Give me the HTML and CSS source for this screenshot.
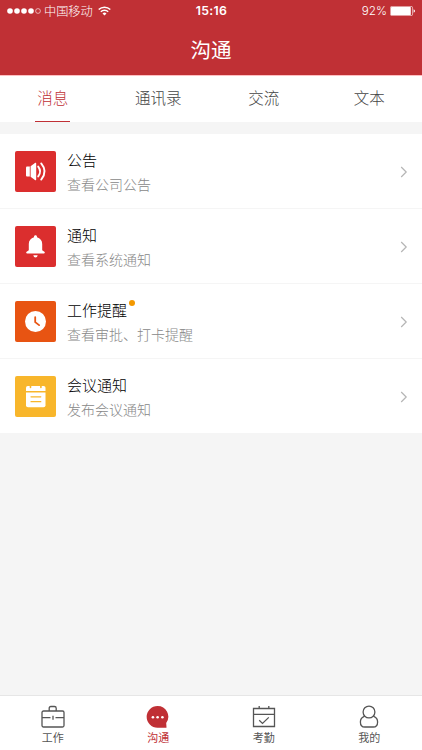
FILE: index.html
```
<!DOCTYPE html>
<html lang="zh-CN">
  <head>
    <meta charset="UTF-8" />
    <meta name="viewport" content="width=device-width, initial-scale=1.0" />
    <title>沟通</title>
    <link rel="stylesheet" href="styles.css">
  </head>
  <body>
    <header class="header">
      <div class="status-bar">
        <div class="status-left">
          <svg class="signal" width="34" height="8" viewBox="0 0 34 8" fill="#fff">
            <circle cx="3" cy="4" r="2.8" />
            <circle cx="10" cy="4" r="2.8" />
            <circle cx="17" cy="4" r="2.8" />
            <circle cx="24" cy="4" r="2.8" />
            <circle cx="31" cy="4" r="2.4" fill="none" stroke="#fff" stroke-width="0.6" />
          </svg>
          <span class="carrier">中国移动</span>
          <svg class="wifi" width="13" height="10" viewBox="0 0 13 10" fill="none" stroke="#fff" stroke-width="1.5">
            <path d="M0.7 3.5a8.3 8.3 0 0 1 11.6 0" />
            <path d="M2.8 5.7a5.3 5.3 0 0 1 7.4 0" />
            <path d="M6.5 9.4 4.5 7.4a2.9 2.9 0 0 1 4 0z" fill="#fff" stroke="none" />
          </svg>
        </div>
        <span class="time">15:16</span>
        <div class="status-right">
          <span>92%</span>
          <svg width="26" height="10" viewBox="0 0 26 10">
            <rect x="0.4" y="0.4" width="22.2" height="9.2" rx="1.4" fill="none" stroke="#fff" stroke-width="0.6" />
            <rect x="1" y="1" width="19.8" height="8" rx="0.6" fill="#fff" />
            <path d="M23.6 3.3q1.4 0.5 1.4 1.7t-1.4 1.7z" fill="#fff" />
          </svg>
        </div>
      </div>
      <h1>沟通</h1>
    </header>

    <nav class="tabs">
      <a class="tab active"><span>消息</span></a>
      <a class="tab"><span>通讯录</span></a>
      <a class="tab"><span>交流</span></a>
      <a class="tab"><span>文本</span></a>
    </nav>

    <main class="content">
      <ul class="list">
        <li class="item">
          <div class="icon red">
            <svg width="41" height="41" viewBox="0 0 41 41" fill="#fff">
              <path d="M11 16.5q0-1 1-1h2.8v10H12q-1 0-1-1z" />
              <path d="M15.6 15.3 20.3 11.8q.9-.5.9.6v16.2q0 1.1-.9.6l-4.7-3.5z" />
              <path d="M23.2 15.6q3.8 4.9 0 9.8M26.2 12.4q6.8 8.1 0 16.2" fill="none" stroke="#fff" stroke-width="1.9" stroke-linecap="round" />
            </svg>
          </div>
          <div class="text">
            <h2>公告</h2>
            <p>查看公司公告</p>
          </div>
          <svg class="arrow" width="8" height="12" viewBox="0 0 8 12"><path d="M1.2 1 6.2 6l-5 5" /></svg>
        </li>
        <li class="item">
          <div class="icon red">
            <svg width="41" height="41" viewBox="0 0 41 41" fill="#fff">
              <path d="M20.5 9.3c.9 0 1.5.6 1.5 1.5v.4c3.2.8 5.2 3.3 5.2 6.7v6.4l2.2 1.5c.8.7.4 1.6-.5 1.6H12.1c-.9 0-1.3-.9-.5-1.6l2.2-1.5v-6.4c0-3.4 2-5.9 5.2-6.7v-.4c0-.9.6-1.5 1.5-1.5z" />
              <path d="M18.3 29.2h4.4q-.4 2.4-2.2 2.4t-2.2-2.4z" />
            </svg>
          </div>
          <div class="text">
            <h2>通知</h2>
            <p>查看系统通知</p>
          </div>
          <svg class="arrow" width="8" height="12" viewBox="0 0 8 12"><path d="M1.2 1 6.2 6l-5 5" /></svg>
        </li>
        <li class="item">
          <div class="icon orange">
            <svg width="41" height="41" viewBox="0 0 41 41">
              <circle cx="20.5" cy="20.5" r="10.5" fill="#fff" />
              <path d="M20.2 16.2v4.9l3.9 3" fill="none" stroke="#e85412" stroke-width="1.8" stroke-linecap="round" />
            </svg>
          </div>
          <div class="text">
            <h2>工作提醒<i class="dot"></i></h2>
            <p>查看审批、打卡提醒</p>
          </div>
          <svg class="arrow" width="8" height="12" viewBox="0 0 8 12"><path d="M1.2 1 6.2 6l-5 5" /></svg>
        </li>
        <li class="item">
          <div class="icon yellow">
            <svg width="41" height="41" viewBox="0 0 41 41">
              <path d="M11 15v-3.2q0-1.8 1.8-1.8h15.9q1.8 0 1.8 1.800V15z" fill="#fff" />
              <path d="M11 16.4h19.5v12.8q0 2-2 2H13q-2 0-2-2z" fill="#fff" />
              <path d="M15.5 9v2.400M25.900 9v2.400" stroke="#f8b62b" stroke-width="1.600" stroke-linecap="round" />
              <path d="M16 20.800h9.800M16 25.700h9.800" stroke="#f8b62b" stroke-width="1.200" stroke-linecap="round" />
            </svg>
          </div>
          <div class="text">
            <h2>会议通知</h2>
            <p>发布会议通知</p>
          </div>
          <svg class="arrow" width="8" height="12" viewBox="0 0 8 12"><path d="M1.2 1 6.2 6l-5 5" /></svg>
        </li>
      </ul>
    </main>

    <footer class="tabbar">
      <a class="tabbar-item">
        <svg width="24" height="24" viewBox="0 0 24 24">
          <rect x="1" y="6" width="22" height="16" rx="1.5" />
          <path d="M8.2 6V3.2q0-1.7 1.7-1.7h3.6q1.7 0 1.7 1.7V6M1 12.7h8.5M14.5 12.7H23M12 10.7v4" />
        </svg>
        <span>工作</span>
      </a>
      <a class="tabbar-item active">
        <svg width="24" height="24" viewBox="0 0 24 24">
          <path class="bubble" d="M11.5 1a10.7 10.7 0 0 1 8.7 17l.3 4.2q0 .5-.5.5h-8.5a10.85 10.85 0 0 1 0-21.7z" />
          <circle cx="6.9" cy="12.2" r="1.3" />
          <circle cx="11.6" cy="12.2" r="1.3" />
          <circle cx="16.4" cy="12.2" r="1.3" />
        </svg>
        <span>沟通</span>
      </a>
      <a class="tabbar-item">
        <svg width="24" height="24" viewBox="0 0 24 24">
          <path d="M1.5 3.5h21v18h-21zM1.5 9.3h21M7.2 1v2.5M16.8 1v2.5M7.200 15.300l3.300 3.100 6.300-6" />
        </svg>
        <span>考勤</span>
      </a>
      <a class="tabbar-item">
        <svg width="24" height="24" viewBox="0 0 24 24">
          <circle cx="12" cy="7" r="5.9" />
          <path d="M7.6 11.2c-2.7 1.2-4.2 3.1-4.2 5.7 0 3.3 1.8 5.1 4.4 5.1h8.4c2.6 0 4.4-1.8 4.4-5.1 0-2.6-1.5-4.5-4.2-5.7" />
        </svg>
        <span>我的</span>
      </a>
    </footer>
  </body>
</html>
```

FILE: styles.css
```
* {
  margin: 0;
  padding: 0;
  box-sizing: border-box;
}

body {
  font-family: "Noto Sans CJK SC", sans-serif;
  font-weight: 300;
  display: flex;
  flex-direction: column;
  height: 100vh;
  background-color: #f5f5f5;
  color: #000;
}

svg {
  display: block;
}

.header {
  height: 76px;
  background-color: #c03035;
  border-bottom: 1px solid #ffbfc2;
  color: white;
}

.status-bar {
  display: grid;
  grid-template-columns: 1fr auto 1fr;
  align-items: center;
  height: 22px;
  padding: 0 6px 0 7px;
  font-size: 12px;
  line-height: 22px;
}

.status-left,
.status-right {
  display: flex;
  align-items: center;
}

.carrier {
  margin: 0 5px 0 3px;
  font-size: 12.2px;
}

.time {
  font-family: Inter, sans-serif;
  font-size: 12.3px;
  font-weight: 600;
  letter-spacing: 0.3px;
}

.status-right {
  justify-content: flex-end;
  gap: 3px;
  font-family: Inter, sans-serif;
  font-size: 11.7px;
}

.header h1 {
  font-size: 20.5px;
  font-weight: 400;
  line-height: 54px;
  text-align: center;
}

.tabs {
  display: flex;
  height: 46px;
  background-color: white;
}

.tab {
  flex: 1;
  display: flex;
  justify-content: center;
  font-size: 15.5px;
  line-height: 43px;
  color: #444;
}

.tab span {
  height: 46px;
}

.tab.active span {
  padding: 0 2px;
  border-bottom: 1px solid #c03035;
  color: #c03035;
}

.content {
  flex: 1;
  padding-top: 12px;
}

.list {
  list-style: none;
  background-color: white;
}

.item {
  display: flex;
  align-items: center;
  height: 75px;
  padding: 1px 14px 0 15px;
  border-bottom: 1px solid #f5f5f5;
}

.icon {
  width: 41px;
  height: 41px;
  margin-right: 11px;
  border-radius: 2px;
}

.red {
  background-color: #db2e2e;
}

.orange {
  background-color: #e85412;
}

.yellow {
  background-color: #f8b62b;
}

.text {
  flex: 1;
}

.text h2 {
  position: relative;
  width: fit-content;
  font-size: 15px;
  font-weight: 300;
  line-height: 24px;
}

.text p {
  font-size: 14px;
  line-height: 24px;
  color: #888;
}

.dot {
  position: absolute;
  top: 2px;
  right: -8px;
  width: 6px;
  height: 6px;
  border-radius: 50%;
  background-color: #f39800;
}

.arrow {
  fill: none;
  stroke: #b5b5b5;
  stroke-width: 1.2;
}

.tabbar {
  display: flex;
  height: 55px;
  padding-top: 9px;
  border-top: 1px solid #e6e6e6;
  background-color: white;
}

.tabbar-item {
  flex: 1;
  display: flex;
  flex-direction: column;
  align-items: center;
  font-size: 11px;
  font-weight: 400;
  line-height: 17px;
  color: #555;
}

.tabbar-item svg {
  fill: none;
  stroke: #555;
  stroke-width: 1.3;
}

.tabbar-item.active {
  color: #c03035;
}

.tabbar-item.active svg {
  fill: #fff;
  stroke: none;
}

.tabbar-item.active .bubble {
  fill: #c03035;
}
```
